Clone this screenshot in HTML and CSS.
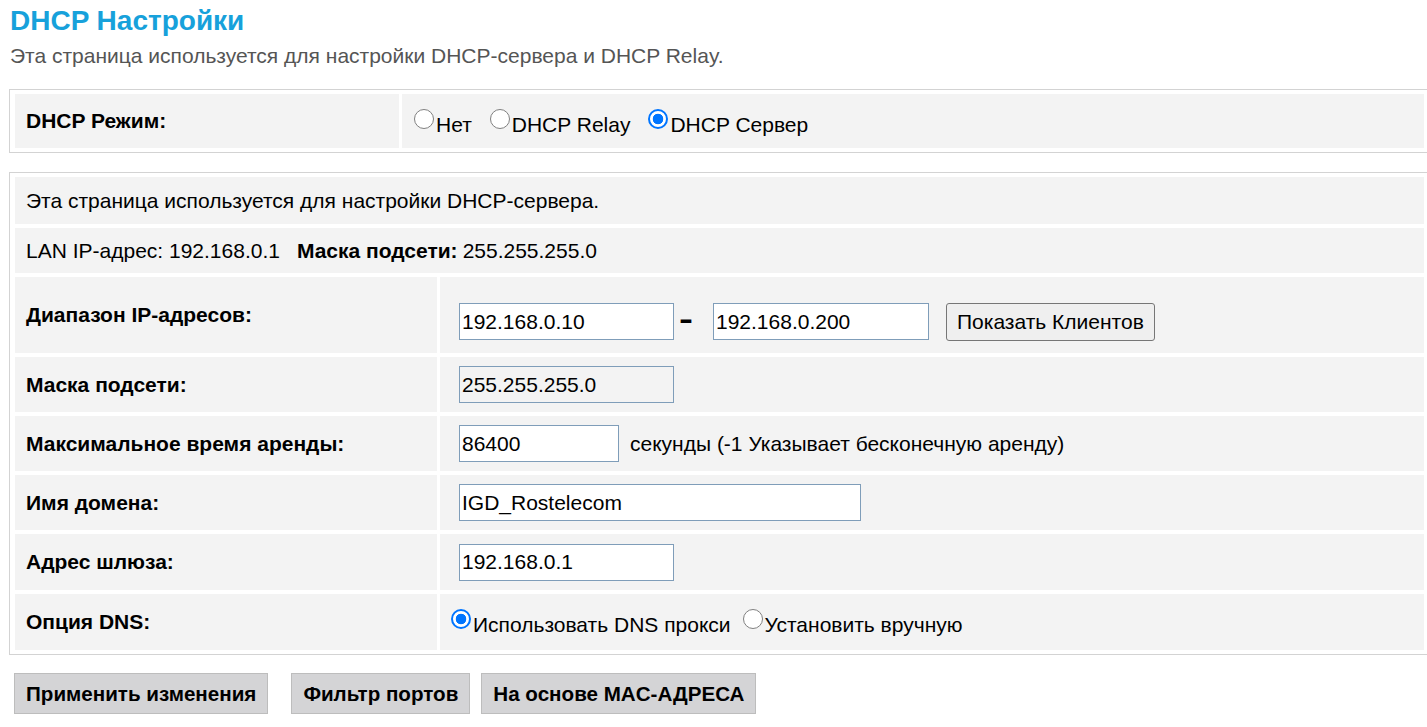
FILE: index.html
```html
<!DOCTYPE html>
<html lang="ru">
<head>
<meta charset="utf-8">
<title>DHCP Настройки</title>
<link rel="stylesheet" href="styles.css">
</head>
<body>
<h1 class="title">DHCP Настройки</h1>
<p class="intro">Эта страница используется для настройки DHCP-сервера и DHCP Relay.</p>

<div class="panel panel-mode">
  <div class="row row-mode">
    <div class="cell c1 label">DHCP Режим:</div>
    <div class="cell c2 radios"><label class="opt"><input type="radio" name="mode" class="radio">Нет</label><label class="opt"><input type="radio" name="mode" class="radio">DHCP Relay</label><label class="opt"><input type="radio" name="mode" class="radio" checked>DHCP Сервер</label></div>
  </div>
</div>

<div class="panel panel-server">
  <div class="row row-desc">
    <div class="cell full">Эта страница используется для настройки DHCP-сервера.</div>
  </div>
  <div class="row row-lan">
    <div class="cell full">LAN IP-адрес: 192.168.0.1<span class="sep"></span><b>Маска подсети:</b> 255.255.255.0</div>
  </div>
  <div class="row row-range">
    <div class="cell c1 label">Диапазон IP-адресов:</div>
    <div class="cell c2 range">
      <input type="text" class="field w214" value="192.168.0.10"><span class="dash">-</span><input type="text" class="field w216" value="192.168.0.200"><button type="button" class="btn-clients">Показать Клиентов</button>
    </div>
  </div>
  <div class="row row-mask">
    <div class="cell c1 label">Маска подсети:</div>
    <div class="cell c2"><input type="text" class="field w214 readonly" value="255.255.255.0" readonly></div>
  </div>
  <div class="row row-lease">
    <div class="cell c1 label">Максимальное время аренды:</div>
    <div class="cell c2"><input type="text" class="field w160" value="86400"><span class="note">секунды (-1 Указывает бесконечную аренду)</span></div>
  </div>
  <div class="row row-domain">
    <div class="cell c1 label">Имя домена:</div>
    <div class="cell c2"><input type="text" class="field w402" value="IGD_Rostelecom"></div>
  </div>
  <div class="row row-gw">
    <div class="cell c1 label">Адрес шлюза:</div>
    <div class="cell c2"><input type="text" class="field w214" value="192.168.0.1"></div>
  </div>
  <div class="row row-dns">
    <div class="cell c1 label">Опция DNS:</div>
    <div class="cell c2 radios dns"><label class="opt"><input type="radio" name="dns" class="radio" checked>Использовать DNS прокси</label><label class="opt"><input type="radio" name="dns" class="radio">Установить вручную</label></div>
  </div>
</div>

<div class="actions">
  <button type="button" class="btn-action apply">Применить изменения</button>
  <button type="button" class="btn-action ports">Фильтр портов</button>
  <button type="button" class="btn-action mac">На основе MAC-АДРЕСА</button>
</div>
</body>
</html>
```

FILE: styles.css
```css
html, body {
  margin: 0;
  padding: 0;
  background: #ffffff;
  overflow: hidden;
}

body {
  font-family: "Liberation Sans", Arial, sans-serif;
  font-size: 21px;
  color: #000;
  padding: 5px 0 0 9px;
}

.title {
  margin: 0 0 0 1px;
  font-size: 28px;
  font-weight: bold;
  color: #17a1db;
  line-height: 31px;
}

.intro {
  margin: 8px 0 0 1px;
  font-size: 21px;
  color: #555555;
  line-height: 24px;
}

.panel {
  box-sizing: border-box;
  width: 1421px;
  border: 1px solid #d3d3d3;
  padding: 4px 5px 4px 5px;
  display: flex;
  flex-direction: column;
  gap: 4px;
}

.panel-mode {
  margin-top: 21px;
}

.panel-server {
  margin-top: 19px;
}

.row {
  display: flex;
  gap: 3px;
}

.cell {
  background: #f3f3f3;
  box-sizing: border-box;
  padding: 0 11px;
  display: flex;
  align-items: center;
}

.panel-mode .c1 { width: 384px; }
.panel-server .c1 { width: 422px; }
.c2 { flex: 1; }
.full { flex: 1; }

.label {
  font-weight: bold;
}

.row-mode { height: 54px; }
.row-desc { height: 47px; }
.row-lan { height: 45px; }
.row-range { height: 76px; }
.row-mask { height: 55px; }
.row-lease { height: 55px; }
.row-domain { height: 55px; }
.row-gw { height: 56px; }
.row-dns { height: 56px; }

.sep {
  display: inline-block;
  width: 17px;
}

.cell b { margin-right: 5px; }

.radios {
  display: block;
  padding-top: 15px;
}

.opt {
  margin-right: 17px;
}

.dns .opt {
  margin-right: 11px;
}

.radio {
  -webkit-appearance: none;
  appearance: none;
  box-sizing: border-box;
  width: 20px;
  height: 20px;
  margin: 0 2px 3px 1px;
  border: 1.5px solid #808080;
  border-radius: 50%;
  background: #fff;
  vertical-align: baseline;
  display: inline-block;
}

.dns .opt:first-child .radio { margin-left: 0; }

.radio:checked {
  border: 2.5px solid #0075ff;
  background: radial-gradient(circle, #0075ff 0 5px, #ffffff 5.6px);
}

.field {
  box-sizing: border-box;
  height: 37px;
  margin: 0 0 0 8px;
  padding: 0 2px;
  border: 1px solid #7f9db9;
  border-radius: 0;
  background: #fff;
  font-family: "Liberation Sans", Arial, sans-serif;
  font-size: 21px;
  color: #000;
  outline: none;
}

.field.readonly { background: #f3f3f3; }

.w214 { width: 215px; }
.w216 { width: 216px; }
.w160 { width: 160px; }
.w402 { width: 402px; }

.range {
  padding-top: 13px;
}

.dash {
  display: inline-block;
  font-size: 30px;
  font-weight: bold;
  line-height: 1;
  margin: 0 14px 6px 7px;
  transform: scaleX(1.4);
}

.btn-clients {
  box-sizing: border-box;
  height: 38px;
  margin-left: 17px;
  padding: 0 10px;
  border: 1px solid #767676;
  border-radius: 3px;
  background: #efefef;
  font-family: "Liberation Sans", Arial, sans-serif;
  font-size: 21px;
  color: #000;
}

.note {
  margin-left: 11px;
}

.actions {
  display: flex;
  margin-top: 18px;
  margin-left: 5px;
}

.btn-action {
  box-sizing: border-box;
  height: 41px;
  padding: 0 11px;
  border: 1px solid #bdbdbd;
  border-radius: 0;
  background: #d4d4d6;
  font-family: "Liberation Sans", Arial, sans-serif;
  font-size: 20.6px;
  font-weight: bold;
  color: #000;
}

.btn-action.ports { margin-left: 23px; }
.btn-action.mac { margin-left: 11px; }
```
